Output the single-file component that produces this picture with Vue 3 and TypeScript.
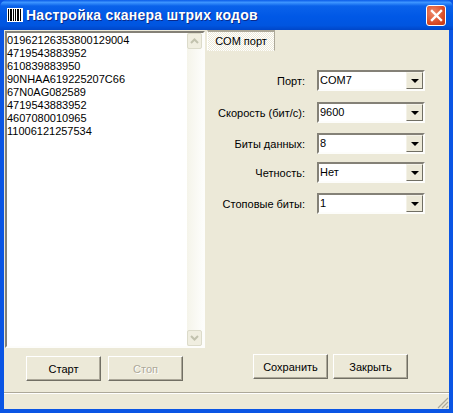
<script setup lang="ts">
const codes = [
  '01962126353800129004',
  '4719543883952',
  '610839883950',
  '90NHAA619225207C66',
  '67N0AG082589',
  '4719543883952',
  '4607080010965',
  '11006121257534',
]

const fields = [
  { label: 'Порт:', value: 'COM7' },
  { label: 'Скорость (бит/с):', value: '9600' },
  { label: 'Биты данных:', value: '8' },
  { label: 'Четность:', value: 'Нет' },
  { label: 'Стоповые биты:', value: '1' },
]
</script>

<template>
  <div class="window">
    <header class="titlebar">
      <svg class="app-icon" width="16" height="14" viewBox="0 0 16 14" shape-rendering="crispEdges">
        <rect x="0" y="0" width="16" height="14" fill="#fff" />
        <path d="M1 1h1v12H1zM3 1h2v12H3zM6 1h1v12H6zM8 1h1v12H8zM10 1h2v12h-2zM13 1h1v12h-1z" fill="#000" />
      </svg>
      <span class="title">Настройка сканера штрих кодов</span>
      <button class="close">
        <svg width="13" height="13" viewBox="0 0 13 13">
          <path d="M2 2l9 9M11 2l-9 9" stroke="#fff" stroke-width="2.4" fill="none" stroke-linecap="square" />
        </svg>
      </button>
    </header>

    <div class="client">
      <div class="body">
        <div class="left">
          <div class="listbox">
            <div class="lines">
              <div v-for="(c, i) in codes" :key="i">{{ c }}</div>
            </div>
            <div class="scroll">
              <div class="sbtn">
                <svg width="9" height="6" viewBox="0 0 9 6"><path d="M1 5l3.5-3.5L8 5" stroke="#c2c2ae" stroke-width="2" fill="none" /></svg>
              </div>
              <div class="sbtn">
                <svg width="9" height="6" viewBox="0 0 9 6"><path d="M1 1l3.5 3.5L8 1" stroke="#c2c2ae" stroke-width="2" fill="none" /></svg>
              </div>
            </div>
          </div>
          <div class="left-buttons">
            <button class="btn">Старт</button>
            <button class="btn" disabled>Стоп</button>
          </div>
        </div>

        <div class="right">
          <div class="tabstrip"><div class="tab">COM порт</div></div>
          <div class="tabpage">
            <div class="form">
              <div v-for="f in fields" :key="f.label" class="row">
                <span class="label">{{ f.label }}</span>
                <div class="combo">
                  <span class="combo-value">{{ f.value }}</span>
                  <span class="arrow-btn"><i class="arrow"></i></span>
                </div>
              </div>
            </div>
            <div class="right-buttons">
              <button class="btn">Сохранить</button>
              <button class="btn">Закрыть</button>
            </div>
          </div>
        </div>
      </div>

      <footer class="statusbar">
        <svg class="grip" width="13" height="13" viewBox="0 0 13 13">
          <path d="M12 2L2 12M12 6l-6 6M12 10l-2 2" stroke="#aca899" stroke-width="1.2" fill="none" />
        </svg>
      </footer>
    </div>
  </div>
</template>

<style>
html, body { margin: 0; background: #ece9d8; }
</style>

<style scoped>
* { box-sizing: border-box; }
.window {
  width: 453px; height: 413px;
  display: flex; flex-direction: column;
  background: #0a55e4;
  padding: 0 4px 4px;
  font-family: "Liberation Sans", Arial, sans-serif;
  font-size: 11px;
  color: #000;
  overflow: hidden;
}
.titlebar {
  height: 30px; flex: none;
  margin: 0 -4px;
  padding: 0 7px 0 7px;
  display: flex; align-items: center; gap: 3px;
  background: linear-gradient(180deg, #0a5be8 0%, #3d95ff 8%, #0a62ea 20%, #0058e6 55%, #0055e0 85%, #0046c8 100%);
  border-radius: 7px 7px 0 0;
}
.app-icon { flex: none; }
.title {
  flex: 1;
  color: #fff; font-weight: 700; font-size: 14px; letter-spacing: 0.25px;
  text-shadow: 1px 1px 0 #0a2a8a;
  white-space: nowrap;
}
.close {
  width: 20px; height: 21px; padding: 0;
  display: flex; align-items: center; justify-content: center;
  background: radial-gradient(circle at 35% 35%, #ee8a6a, #d8451f 70%, #c23a17);
  border: 1px solid #fff; border-radius: 3px;
}
.client {
  flex: 1; min-height: 0;
  display: flex; flex-direction: column;
  background: #ece9d8;
}
.body { flex: 1; min-height: 0; display: flex; }
.left { width: 201px; flex: none; padding: 1px 0 0 1px; display: flex; flex-direction: column; }
.listbox {
  flex: none; height: 317px;
  display: flex;
  background: #fff;
  border: 2px solid;
  border-color: #848177 #fdfdfb #fdfdfb #848177;
}
.lines { flex: 1; padding: 1px 0 0; line-height: 13px; white-space: nowrap; }
.scroll {
  width: 16px; flex: none;
  display: flex; flex-direction: column; justify-content: space-between;
  background: linear-gradient(90deg, #f5f4ea, #fdfdfb);
}
.sbtn {
  width: 15px; height: 16px; display: flex; align-items: center; justify-content: center;
  background: #f0eee0;
  border: 1px solid #dcdbca; border-radius: 2px;
}
.left-buttons { display: flex; gap: 7px; padding: 8px 0 0 21px; }
.btn {
  width: 75px; height: 25px; padding: 0;
  font: inherit; color: #000;
  background: #ece9d8;
  border: 1px solid;
  border-color: #fff #716f64 #716f64 #fff;
  box-shadow: inset -1px -1px 0 #aca899;
}
.btn:disabled { color: #aca899; text-shadow: 1px 1px 0 #fff; }
.right { flex: 1; min-width: 0; padding-left: 2px; display: flex; flex-direction: column; }
.tabstrip { height: 21px; flex: none; display: flex; align-items: flex-end; }
.tab {
  width: 68px; height: 21px;
  text-align: center; line-height: 19px;
  background: repeating-conic-gradient(#fff 0 25%, #ece9d8 0 50%) 0 0 / 2px 2px;
  border: 1px solid;
  border-color: #aca899 #aca899 transparent #fff;
  border-top-width: 2px;
}
.tabpage {
  flex: 1; display: flex; flex-direction: column;
  padding: 0 17px 0 0;
}
.form { display: flex; flex-direction: column; padding-top: 19px; gap: 10px; }
.row { display: flex; align-items: center; height: 21px; }
.row:nth-child(2) { margin-top: 1px; }
.row:nth-child(4) { margin-top: -2px; }
.label { width: 98px; text-align: right; flex: none; white-space: nowrap; }
.combo {
  width: 108px; height: 21px; margin-left: 12px;
  display: flex; align-items: stretch;
  background: #fff;
  border: 2px solid;
  border-color: #848177 #fdfdfb #fdfdfb #848177;
}
.combo-value { flex: 1; padding-left: 1px; line-height: 16px; }
.arrow-btn {
  width: 17px; display: flex; align-items: center; justify-content: center;
  background: #ece9d8;
  border: 1px solid; border-color: #f4f2e8 #716f64 #716f64 #f4f2e8;
}
.arrow { width: 0; height: 0; border: 4px solid transparent; border-top-color: #000; border-bottom: 0; }
.right-buttons { margin-top: auto; display: flex; gap: 5px; padding: 0 0 13px 46px; }
.statusbar {
  height: 17px; flex: none;
  border-top: 1px solid #aca899;
  box-shadow: inset 0 1px 0 #fff;
  display: flex; justify-content: flex-end; align-items: flex-end;
}
</style>
